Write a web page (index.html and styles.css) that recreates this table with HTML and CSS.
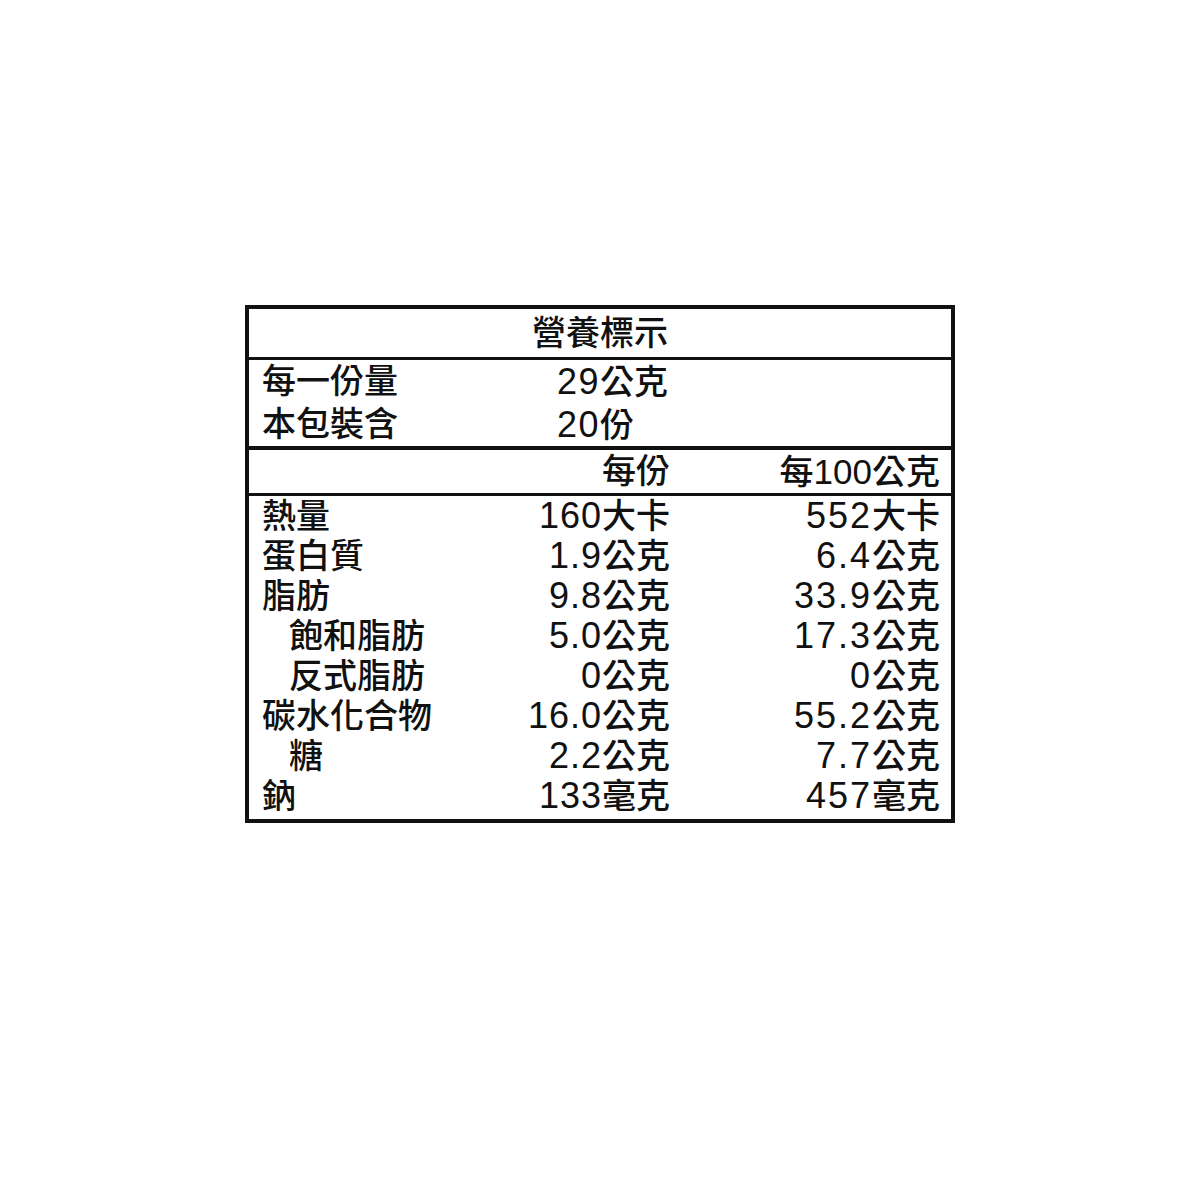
FILE: index.html
```html
<!DOCTYPE html>
<html lang="zh-Hant">
<head>
<meta charset="utf-8">
<title>營養標示</title>
<link rel="stylesheet" href="styles.css">
</head>
<body>
<div class="page">
  <div class="label">
    <div class="title">營養標示</div>
    <div class="serving">
      <div class="s-name">每一份量</div><div class="s-val"><span class="n">29</span>公克</div>
      <div class="s-name">本包裝含</div><div class="s-val"><span class="n">20</span>份</div>
    </div>
    <div class="head grid">
      <div></div><div class="num">每份</div><div class="num">每<span class="h">100</span>公克</div>
    </div>
    <div class="data">
      <div class="grid row"><div>熱量</div><div class="num"><span class="n">160</span>大卡</div><div class="num"><span class="n">552</span>大卡</div></div>
      <div class="grid row"><div>蛋白質</div><div class="num"><span class="n">1.9</span>公克</div><div class="num"><span class="n">6.4</span>公克</div></div>
      <div class="grid row"><div>脂肪</div><div class="num"><span class="n">9.8</span>公克</div><div class="num"><span class="n">33.9</span>公克</div></div>
      <div class="grid row"><div class="sub">飽和脂肪</div><div class="num"><span class="n">5.0</span>公克</div><div class="num"><span class="n">17.3</span>公克</div></div>
      <div class="grid row"><div class="sub">反式脂肪</div><div class="num"><span class="n">0</span>公克</div><div class="num"><span class="n">0</span>公克</div></div>
      <div class="grid row"><div>碳水化合物</div><div class="num"><span class="n">16.0</span>公克</div><div class="num"><span class="n">55.2</span>公克</div></div>
      <div class="grid row"><div class="sub">糖</div><div class="num"><span class="n">2.2</span>公克</div><div class="num"><span class="n">7.7</span>公克</div></div>
      <div class="grid row"><div>鈉</div><div class="num"><span class="n">133</span>毫克</div><div class="num"><span class="n">457</span>毫克</div></div>
    </div>
  </div>
</div>
</body>
</html>
```
FILE: styles.css
```css
html, body {
  margin: 0;
  padding: 0;
  background: #ffffff;
}
body {
  width: 1200px;
  height: 1200px;
  font-family: "Liberation Sans", "Noto Sans CJK TC", sans-serif;
  color: #111111;
}
.page {
  padding: 305px 0 0 245px;
}
.label {
  width: 702px;
  border: 4px solid #111111;
  font-size: 34px;
  font-weight: 500;
}
.title {
  height: 48px;
  line-height: 48px;
  text-align: center;
  border-bottom: 3px solid #111111;
}
.serving {
  display: grid;
  grid-template-columns: 295px auto;
  padding-left: 13px;
  height: 86px;
  grid-auto-rows: 43px;
  line-height: 43px;
  border-bottom: 4px solid #111111;
}
.serving .n {
  font-size: 36px;
  letter-spacing: 1.5px;
}
.grid {
  display: grid;
  grid-template-columns: 208px 200px 270px;
  padding-left: 13px;
  padding-right: 11px;
}
.head {
  height: 43px;
  line-height: 43px;
  border-bottom: 3px solid #111111;
}
.head .h {
  font-size: 35px;
}
.data {
  padding-bottom: 3px;
}
.row {
  height: 40px;
  line-height: 40px;
}
.num {
  text-align: right;
}
.row .n {
  font-size: 36px;
}
.row .num:nth-child(2) .n {
  letter-spacing: 1px;
}
.row .num:nth-child(3) .n {
  letter-spacing: 2px;
}
.sub {
  padding-left: 27px;
}
```
